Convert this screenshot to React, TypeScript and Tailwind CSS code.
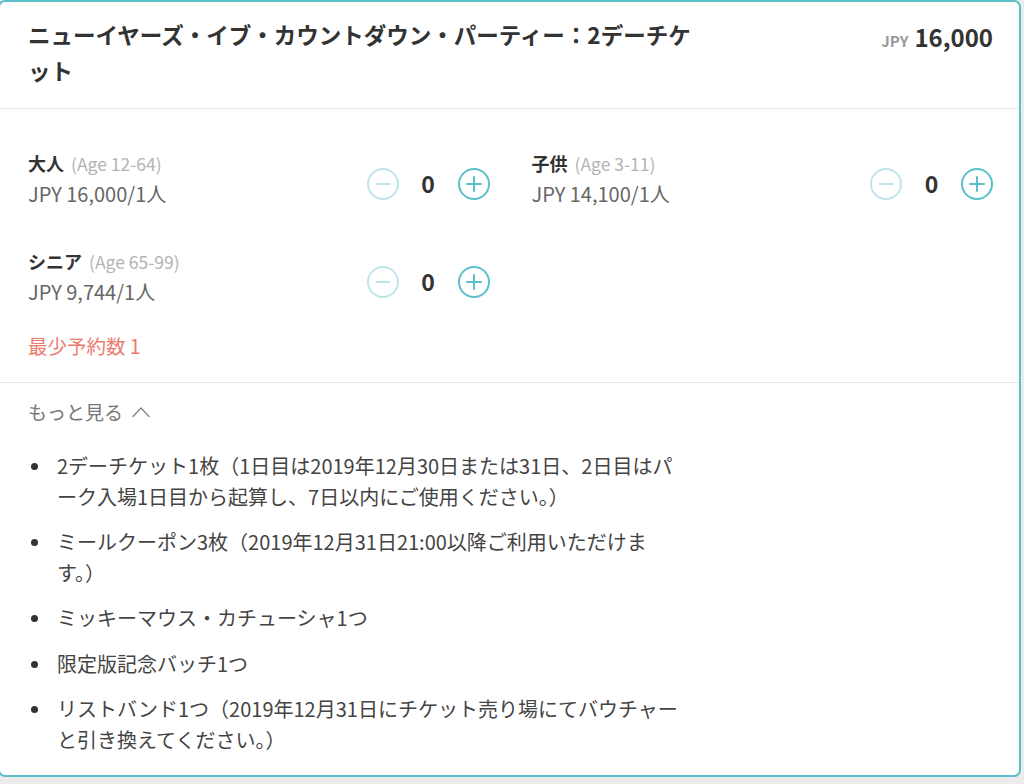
import React from "react";

const font = "font-['Noto_Sans_CJK_JP','Noto_Sans',sans-serif]";

type Rate = { name: string; age: string; price: string };

const rates: Rate[] = [
  { name: "大人", age: "(Age 12-64)", price: "JPY 16,000/1人" },
  { name: "子供", age: "(Age 3-11)", price: "JPY 14,100/1人" },
  { name: "シニア", age: "(Age 65-99)", price: "JPY 9,744/1人" },
];

const items: string[][] = [
  ["2デーチケット1枚（1日目は2019年12月30日または31日、2日目はパ", "ーク入場1日目から起算し、7日以内にご使用ください。）"],
  ["ミールクーポン3枚（2019年12月31日21:00以降ご利用いただけま", "す。）"],
  ["ミッキーマウス・カチューシャ1つ"],
  ["限定版記念バッチ1つ"],
  ["リストバンド1つ（2019年12月31日にチケット売り場にてバウチャー", "と引き換えてください。）"],
];

function Stepper() {
  return (
    <div className="mt-[10px] flex items-center">
      <button className="flex h-8 w-8 items-center justify-center rounded-full border-2 border-[#bfe5ea]">
        <svg width="16" height="16" viewBox="0 0 16 16">
          <path d="M1.5 8h13" stroke="#bfe5ea" strokeWidth="2" strokeLinecap="round" />
        </svg>
      </button>
      <span className="w-[59px] text-center text-[23px] font-bold leading-none text-[#333]">0</span>
      <button className="flex h-8 w-8 items-center justify-center rounded-full border-2 border-[#5bbfca]">
        <svg width="18" height="18" viewBox="0 0 18 18">
          <path d="M2 9h14M9 2v14" stroke="#5bbfca" strokeWidth="2" strokeLinecap="round" />
        </svg>
      </button>
    </div>
  );
}

function RateRow({ rate }: { rate: Rate }) {
  return (
    <div className="flex items-center justify-between">
      <div className="flex flex-col">
        <div className="flex items-baseline gap-[7px] leading-[30px]">
          <span className="text-[18px] font-bold text-[#333]">{rate.name}</span>
          <span className="text-[17.5px] text-[#b3b3b3]">{rate.age}</span>
        </div>
        <div className="text-[20px] leading-[30px] text-[#666]">{rate.price}</div>
      </div>
      <Stepper />
    </div>
  );
}

export default function App() {
  return (
    <div className={`min-h-screen overflow-hidden bg-[#ececec] ${font}`}>
      <div className="-ml-[2px] h-[777px] w-[1023px] overflow-hidden rounded-[7px] border-2 border-[#5bbfca] bg-white">
        {/* header */}
        <div className="flex items-start justify-between border-b border-[#e6e6e6] pb-[20px] pl-7 pr-[26px] pt-[14px]">
          <h1 className="text-[22.5px] font-bold leading-[36px] text-[#333]">
            ニューイヤーズ・イブ・カウントダウン・パーティー：2デーチケ
            <br />
            ット
          </h1>
          <div className="flex items-baseline gap-[6px] pt-[3px] whitespace-nowrap">
            <span className="text-[15px] font-bold text-[#999]">JPY</span>
            <span className="text-[24px] font-bold text-[#333]">16,000</span>
          </div>
        </div>

        {/* rates */}
        <div className="border-b border-[#e6e6e6] pb-[21px] pl-7 pr-[26px] pt-[39px]">
          <div className="grid grid-cols-2 gap-x-[42px] gap-y-[37px]">
            {rates.map((r) => (
              <RateRow key={r.name} rate={r} />
            ))}
          </div>
          <div className="mt-[24px] text-[19.5px] leading-[30px] text-[#ec7b6e]">最少予約数 1</div>
        </div>

        {/* more */}
        <div className="pl-7 pr-[26px] pt-[14px]">
          <button className="flex items-center gap-[8px] text-[19px] leading-[30px] text-[#777]">
            もっと見る
            <svg width="20" height="12" viewBox="0 0 20 12" fill="none">
              <path d="M2 10.5 10 2l8 8.5" stroke="#888" strokeWidth="1.4" strokeLinecap="round" strokeLinejoin="round" />
            </svg>
          </button>
          <ul className="mt-[24px] flex flex-col gap-[15px]">
            {items.map((lines, i) => (
              <li key={i} className="flex items-start">
                <span className="mt-[12px] ml-[3px] mr-[19px] h-[7px] w-[7px] shrink-0 rounded-full bg-[#333]" />
                <div className="text-[20px] leading-[30.5px] text-[#444] whitespace-nowrap">
                  {lines.map((l, j) => (
                    <div key={j}>{l}</div>
                  ))}
                </div>
              </li>
            ))}
          </ul>
        </div>
      </div>
    </div>
  );
}
